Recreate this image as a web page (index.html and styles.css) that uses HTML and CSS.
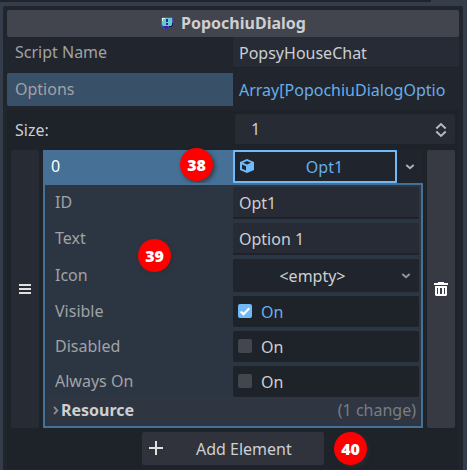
FILE: index.html
```html
<!DOCTYPE html>
<html lang="en">
<head>
<meta charset="utf-8">
<title>PopochiuDialog</title>
<link rel="stylesheet" href="styles.css">
</head>
<body>
<div class="strip"></div>
<main class="inspector">
  <header class="title">
    <svg class="logo" width="12" height="12" viewBox="0 0 12 12" shape-rendering="crispEdges">
      <path fill="#4a55c4" d="M1 0h10v1h1v8h-1v1H7v1H6v1H3v-2H1V9H0V1h1z"/>
      <path fill="#2e2a96" d="M3 9h4v2H6v1H4v-1H3z"/>
      <path fill="#111b4b" d="M11 6h1v3h-1zM8 9h3v1H8z"/>
      <path fill="#65c9cf" d="M2 1h9v7h-1v1H2V8H1V3h1z"/>
      <path fill="#e5faf4" d="M1 1h3v1H2v2H1z"/>
      <path fill="#2e2a96" d="M5 2h2v3H5zM5 6h2v2H5z"/>
    </svg>
    <span>PopochiuDialog</span>
  </header>
  <div class="prop script"><span class="label">Script Name</span><span class="field">PopsyHouseChat</span></div>
  <div class="prop options"><span class="label">Options</span><span class="value">Array[PopochiuDialogOptio</span></div>
  <section class="array">
    <div class="size"><span class="size-label">Size:</span>
      <div class="spin"><span>1</span>
        <svg width="12" height="16" viewBox="0 0 12 16" fill="none" stroke="#b8babd" stroke-width="2"><path d="M1.300 6.400 6 2l4.700 4.400M1.300 9.600 6 14l4.700-4.400"/></svg>
      </div>
    </div>
    <div class="items">
      <div class="handle"><svg width="12" height="10" viewBox="0 0 12 10" fill="#e0e0e0"><path d="M0 0h12v2H0zM0 4h12v2H0zM0 8h12v2H0z"/></svg></div>
      <div class="card">
        <div class="card-head">
          <span class="index">0</span><span class="badge b38">38</span>
          <div class="resource-button">
            <svg class="cube" width="14" height="14" viewBox="0 0 14 14"><path fill="#70bafa" d="m7 0 7 3v8l-7 3-7-3V3z"/><path fill="#20242d" d="m7 2 4 1.700-4 1.700-4-1.700zM2 5.400l4 1.800v4.300L2 9.800z"/></svg>
            <span>Opt1</span>
          </div>
          <div class="drop"><svg width="10" height="8" viewBox="0 0 10 8" fill="none" stroke="#aeb1b5" stroke-width="2"><path d="m1.300 2 3.700 3.200L8.700 2"/></svg></div>
        </div>
        <div class="card-body">
          <div class="row text"><span>ID</span><div class="input">Opt1</div></div>
          <div class="row text"><span>Text</span><div class="input">Option 1</div></div>
          <div class="row icon"><span>Icon</span><div class="select"><span>&lt;empty&gt;</span><svg width="10" height="8" viewBox="0 0 10 8" fill="none" stroke="#92959b" stroke-width="2"><path d="m1.300 2 3.700 3.200L8.700 2"/></svg></div></div>
          <div class="row check"><span>Visible</span><div class="toggle on"><i><svg width="14" height="14" viewBox="0 0 14 14" fill="none" stroke="#fff" stroke-width="2.200"><path d="m2.700 7.500 2.800 2.700 5.800-6"/></svg></i>On</div></div>
          <div class="row check"><span>Disabled</span><div class="toggle"><i></i>On</div></div>
          <div class="row check"><span>Always On</span><div class="toggle"><i></i>On</div></div>
          <div class="group"><svg width="6" height="9" viewBox="0 0 6 9" fill="none" stroke="#8a8e96" stroke-width="1.800"><path d="m1 .8 3.300 3.700L1 8.200"/></svg><b>Resource</b><span>(1 change)</span></div>
          <span class="badge b39">39</span>
        </div>
      </div>
      <div class="delete"><svg width="14" height="14" viewBox="0 0 14 14" fill="#fff"><path d="M4 0h6v1h4v2H0V1h4z"/><path fill-rule="evenodd" d="M1 4h12v9l-1 1H2l-1-1zM3 6v6h1V6zM6 6v6h2V6zM10 6v6h1V6z"/></svg></div>
    </div>
    <div class="add-row">
      <div class="add"><svg width="14" height="14" viewBox="0 0 14 14" fill="#e0e0e0"><path d="M6 0h2v6h6v2H8v6H6V8H0V6h6z"/></svg><span>Add Element</span></div>
      <span class="badge b40">40</span>
    </div>
  </section>
</main>
</body>
</html>
```
FILE: styles.css
```css
* { box-sizing: border-box; }
body {
  margin: 0;
  width: 467px;
  height: 470px;
  overflow: hidden;
  background: #363d4a;
  color: #cdcfd2;
  font: 16px/22px "Noto Sans", sans-serif;
  white-space: nowrap;
}
svg { display: block; flex: none; }
.strip { width: 431px; height: 2px; background: #20242d; }
.inspector {
  width: 460px;
  height: 464px;
  margin: 4px 0 0 3px;
  padding: 4px 4px 0;
  border-radius: 2px 2px 0 0;
  background: #21252e;
}
.title {
  display: flex;
  justify-content: center;
  gap: 8px;
  height: 27px;
  padding: 2px 0 0 1px;
  border-radius: 2px;
  background: #42454e;
  font-weight: 700;
}
.logo { margin-top: 5px; }
.prop { display: grid; grid-template-columns: 226px 226px; }
.script { height: 36px; }
.label { padding: 4px 8px 0; color: #a1a2a5; }
.field {
  height: 31px;
  padding: 5px 6px 0;
  border-bottom: 1px solid #1e222a;
  background: #262b35;
}
.options { height: 37px; }
.options .label { height: 33px; padding-top: 5px; border-radius: 2px 0 0 2px; background: #385068; }
.value { padding: 6px 6px 0; color: #68aee9; }
.array {
  height: 359px;
  padding: 4px 4px 0;
  border-radius: 2px;
  background: #1e2229;
}
.size { display: grid; grid-template-columns: 224px 220px; height: 36px; }
.size-label { padding: 5px 4px 0; }
.spin {
  display: flex;
  justify-content: space-between;
  height: 30px;
  padding: 4px 8px 0 16px;
  border-radius: 2px;
  background: #262b34;
}
.spin svg { margin-top: 4px; }
.items { display: flex; gap: 4px; height: 278px; }
.handle, .delete {
  display: flex;
  align-items: center;
  justify-content: center;
  width: 28px;
  border-radius: 2px;
  background: #262b34;
}
.delete { background: #373a42; }
.card { width: 380px; background: #2c3643; }
.card-head { display: flex; position: relative; height: 33px; background: #467096; }
.index { width: 190px; padding: 5px 8px 0; color: #fff; }
.resource-button {
  display: flex;
  width: 164px;
  padding: 4px 4px 0 5px;
  border: 2px solid #70bafa;
  border-radius: 1px;
  background: #20242d;
  color: #68aee9;
}
.cube { margin-top: 3px; }
.resource-button span { flex: 1; padding-left: 4px; text-align: center; }
.drop {
  display: flex;
  align-items: center;
  justify-content: center;
  width: 26px;
  background: #20242d;
}
.card-body {
  position: relative;
  height: 245px;
  padding: 2px 2px 0;
  border: 2px solid #467096;
}
.row { display: grid; grid-template-columns: 186px 186px; margin-bottom: 4px; }
.row > span { padding: 4px 8px 0; color: #a1a2a5; }
.row.icon > span { padding-top: 5px; }
.row.text, .input { height: 32px; }
.input {
  padding: 5px 6px 0;
  border-bottom: 2px solid #1e222a;
  border-radius: 2px 2px 0 0;
  background: #262b35;
}
.row.icon { height: 33px; }
.select {
  display: flex;
  align-items: center;
  padding-right: 8px;
  border-radius: 2px;
  background: #20242d;
}
.select span { flex: 1; padding-right: 9px; text-align: center; }
.row.check { height: 31px; }
.toggle {
  display: flex;
  gap: 9px;
  padding: 5px 5px 0;
  border-radius: 2px;
  background: #1e2229;
}
.toggle i { width: 14px; height: 14px; margin-top: 3px; border-radius: 2px; background: #43464e; }
.toggle.on { color: #68aee9; }
.toggle.on i { background: #70bafa; }
.group {
  display: flex;
  height: 27px;
  margin-top: -4px;
  padding: 2px 3px 0 6px;
  background: #303641;
}
.group svg { margin: 7px 2px 0 0; }
.group span { margin-left: auto; color: #787d86; }
.add-row { position: relative; display: flex; justify-content: center; padding-top: 4px; }
.add {
  display: flex;
  width: 182px;
  height: 33px;
  padding: 6px 0 0 7px;
  border-radius: 2px;
  background: #30333c;
}
.add svg { margin-top: 3px; }
.add span { margin-left: 33px; }
.badge {
  position: absolute;
  width: 33px;
  height: 33px;
  border-radius: 50%;
  background: #fe0000;
  box-shadow: 2px 2px 4px rgb(45 48 50 / 80%);
  color: #fff;
  font: 800 16px/34px "Open Sans", sans-serif;
  text-align: center;
}
.b38 { left: 137px; top: -2px; }
.b39 { left: 93px; top: 54px; }
.b40 { left: 323px; top: 4px; }
```
